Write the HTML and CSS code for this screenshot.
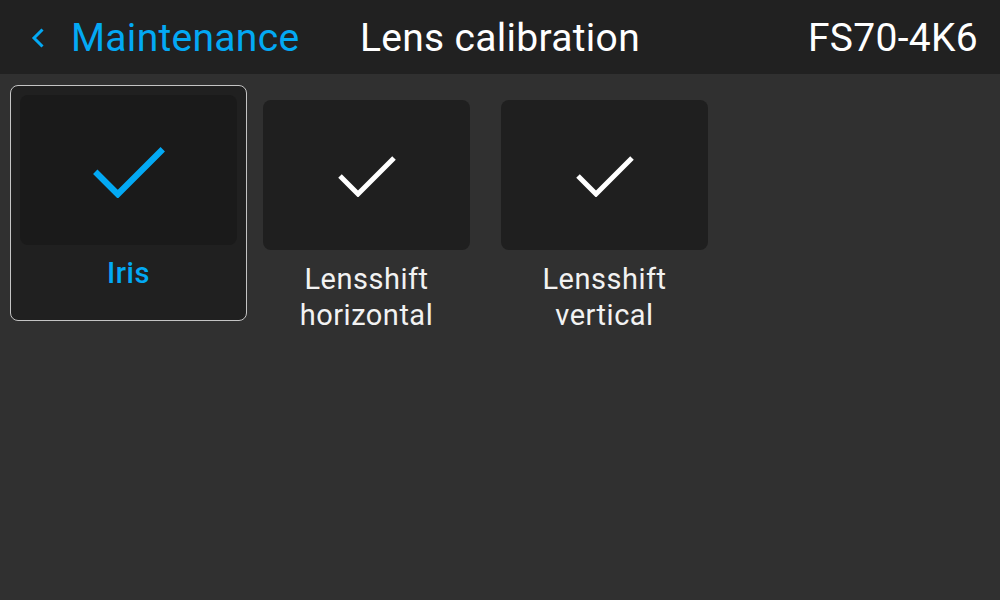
FILE: index.html
```html
<!DOCTYPE html>
<html lang="en">
<head>
    <meta charset="UTF-8">
    <title>Lens calibration</title>
    <link rel="stylesheet" href="styles.css">
</head>
<body>
    <header class="topbar">
        <a class="back" href="#">
            <svg class="chevron" viewBox="0 0 14 20" width="14" height="20">
                <polyline points="11.5,1.5 3,10 11.5,18.5" fill="none" stroke="currentColor" stroke-width="3"/>
            </svg>
            <span>Maintenance</span>
        </a>
        <div class="title">Lens calibration</div>
        <div class="device">FS70-4K6</div>
    </header>

    <main class="tiles">
        <div class="item selected">
            <div class="tile">
                <svg class="check" viewBox="0 0 60 44">
                    <polyline points="3,23 21,41 57,5" fill="none" stroke="currentColor" stroke-width="5"/>
                </svg>
            </div>
            <div class="label">Iris</div>
        </div>
        <div class="item">
            <div class="tile">
                <svg class="check" viewBox="0 0 60 44">
                    <polyline points="3,23 21,41 57,5" fill="none" stroke="currentColor" stroke-width="5"/>
                </svg>
            </div>
            <div class="label">Lensshift<br>horizontal</div>
        </div>
        <div class="item">
            <div class="tile">
                <svg class="check" viewBox="0 0 60 44">
                    <polyline points="3,23 21,41 57,5" fill="none" stroke="currentColor" stroke-width="5"/>
                </svg>
            </div>
            <div class="label">Lensshift<br>vertical</div>
        </div>
    </main>
</body>
</html>
```

FILE: styles.css
```css
body {
    margin: 0;
    background-color: #303030;
    font-family: 'Roboto', 'Liberation Sans', sans-serif;
    color: #fff;
}

.topbar {
    height: 74px;
    background-color: #212121;
    display: grid;
    grid-template-columns: 1fr auto 1fr;
    align-items: center;
    padding: 2px 22px 0;
    box-sizing: border-box;
    font-size: 39px;
    letter-spacing: 0.3px;
}

.back {
    display: flex;
    align-items: center;
    gap: 26px;
    margin-left: 9px;
    color: #03a9f4;
    text-decoration: none;
}

.chevron {
    display: block;
}

.title {
    text-align: center;
}

.device {
    text-align: right;
}

.tiles {
    display: flex;
    gap: 1px;
    padding: 11px 10px;
}

.item {
    width: 237px;
    height: 236px;
    box-sizing: border-box;
    border: 1px solid transparent;
    border-radius: 8px;
    padding: 14px 14px 0;
    text-align: center;
}

.tile {
    height: 150px;
    background-color: #1f1f1f;
    border-radius: 8px;
    display: flex;
    align-items: center;
    justify-content: center;
}

.check {
    width: 60px;
    height: 44px;
    color: #fff;
}

.label {
    margin-top: 11px;
    font-size: 29px;
    line-height: 36px;
    letter-spacing: 0.5px;
    color: #f2f2f2;
}

.item.selected {
    background-color: #202020;
    border-color: #c4c4c4;
    padding: 9px 9px 0;
}

.item.selected .tile {
    background-color: #1a1a1a;
}

.item.selected .check {
    width: 76px;
    height: 55px;
    color: #03a9f4;
}

.item.selected .label {
    margin-top: 10px;
    font-weight: 500;
    color: #03a9f4;
}
```
